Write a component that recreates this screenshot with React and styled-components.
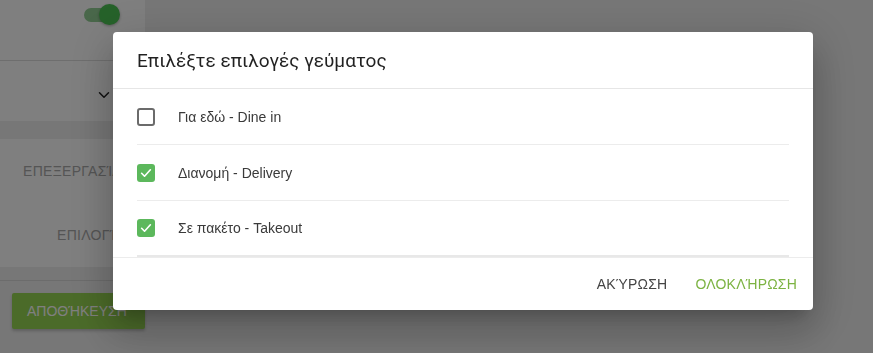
import React, { useState } from 'react';
import styled, { createGlobalStyle } from 'styled-components';
import { ChevronDown } from 'lucide-react';

const GlobalStyle = createGlobalStyle`
  html, body {
    margin: 0;
    padding: 0;
    background: #eeeeee;
    font-family: "Liberation Sans", Arial, sans-serif;
  }
`;

const Page = styled.div`
  width: 873px;
  height: 353px;
  overflow: hidden;
`;

const Sidebar = styled.div`
  width: 145px;
  display: flex;
  flex-direction: column;
`;

const Card = styled.div`
  background: #ffffff;
  margin-bottom: ${p => p.$gap || 0}px;
  overflow: hidden;
`;

const ToggleRow = styled.div`
  height: 61px;
  border-bottom: 1px solid #dddddd;
  display: flex;
  justify-content: flex-end;
  padding: 2px 35px 0 0;
  box-sizing: border-box;
`;

const Track = styled.div`
  position: relative;
  width: 26px;
  height: 14px;
  margin-top: 6px;
  border-radius: 7px;
  background: #93cf95;
`;

const Thumb = styled.div`
  position: absolute;
  right: -10px;
  top: -4px;
  width: 21px;
  height: 21px;
  border-radius: 50%;
  background: #4cc554;
  box-shadow: 0 1px 3px rgba(0, 0, 0, 0.3);
`;

const SelectRow = styled.div`
  height: 60px;
  display: flex;
  justify-content: flex-end;
  align-items: center;
  padding: 8px 32px 0 0;
  box-sizing: border-box;
  color: #222;
`;

const TabItem = styled.div`
  height: 64px;
  display: flex;
  align-items: center;
  padding-left: ${p => p.$indent}px;
  white-space: nowrap;
  font-size: 14px;
  color: #aaaaaa;
  letter-spacing: 0.3px;
`;

const Divider = styled.div`
  height: 1px;
  background: #d8d8d8;
  margin: 13px 0 12px;
`;

const SaveButton = styled.button`
  margin-left: 12px;
  width: 133px;
  height: 36px;
  border: none;
  border-radius: 2px;
  background: #97d653;
  color: #ffffff;
  font-family: inherit;
  font-size: 14px;
  text-align: left;
  padding-left: 15px;
  white-space: nowrap;
  box-shadow: 0 2px 3px rgba(0, 0, 0, 0.2);
`;

const Overlay = styled.div`
  position: fixed;
  inset: 0;
  background: rgba(0, 0, 0, 0.5);
  padding: 32px 0 0 113px;
`;

const Dialog = styled.div`
  width: 700px;
  height: 278px;
  background: #ffffff;
  border-radius: 4px;
  display: flex;
  flex-direction: column;
  box-shadow: 0 11px 15px -7px rgba(0, 0, 0, 0.2), 0 24px 38px 3px rgba(0, 0, 0, 0.14), 0 9px 46px 8px rgba(0, 0, 0, 0.12);
`;

const Title = styled.h2`
  margin: 0;
  height: 57px;
  box-sizing: border-box;
  padding: 17px 24px 0;
  font-family: Roboto, "Noto Sans", sans-serif;
  font-size: 19px;
  font-weight: 400;
  color: rgba(0, 0, 0, 0.87);
  border-bottom: 1px solid #e6e6e6;
`;

const Content = styled.div`
  padding: 0 24px;
`;

const OptionRow = styled.label`
  height: 56px;
  display: flex;
  align-items: center;
  gap: 23px;
  border-bottom: 1px solid #ececec;
  box-sizing: border-box;
  font-size: 14px;
  color: #3a3a3a;
  cursor: pointer;
  &:last-child {
    border-bottom: 2px solid #e8e8e8;
  }
`;

const Box = styled.span`
  width: 18px;
  height: 18px;
  box-sizing: border-box;
  border-radius: 3px;
  border: ${p => (p.$checked ? 'none' : '2px solid #6b6b6b')};
  background: ${p => (p.$checked ? '#5cb85c' : '#ffffff')};
  display: flex;
  align-items: center;
  justify-content: center;
`;

const Actions = styled.div`
  flex: 1;
  display: flex;
  justify-content: flex-end;
  align-items: center;
  gap: 12px;
  padding: 0 8px 0 0;
  border-top: 1px solid #ececec;
`;

const ActionButton = styled.button`
  border: none;
  background: none;
  padding: 6px 8px;
  font-family: inherit;
  font-size: 14px;
  letter-spacing: 0.2px;
  color: ${p => (p.$primary ? '#7cb342' : '#444444')};
  cursor: pointer;
`;

const options = [
  { id: 'dine', label: 'Για εδώ - Dine in', checked: false },
  { id: 'delivery', label: 'Διανομή - Delivery', checked: true },
  { id: 'takeout', label: 'Σε πακέτο - Takeout', checked: true },
];

const Check = () => (
  <svg width="14" height="14" viewBox="0 0 24 24" fill="none" stroke="#fff" strokeWidth="2.8" strokeLinecap="round" strokeLinejoin="round">
    <path d="M4.5 12.5l5 5L19.5 6.5" />
  </svg>
);

const App = () => {
  const [selected, setSelected] = useState(
    options.reduce((acc, o) => ({ ...acc, [o.id]: o.checked }), {})
  );

  const toggle = (id) => setSelected({ ...selected, [id]: !selected[id] });

  return (
    <Page>
      <GlobalStyle />
      <Sidebar>
        <Card $gap={18}>
          <ToggleRow>
            <Track>
              <Thumb />
            </Track>
          </ToggleRow>
          <SelectRow>
            <ChevronDown size={18} strokeWidth={2} />
          </SelectRow>
        </Card>
        <Card>
          <TabItem $indent={23}>ΕΠΕΞΕΡΓΑΣΊΑ</TabItem>
          <TabItem $indent={57}>ΕΠΙΛΟΓΉ</TabItem>
        </Card>
        <Divider />
        <SaveButton>ΑΠΟΘΉΚΕΥΣΗ</SaveButton>
      </Sidebar>

      <Overlay>
        <Dialog>
          <Title>Επιλέξτε επιλογές γεύματος</Title>
          <Content>
            {options.map((o) => (
              <OptionRow key={o.id} onClick={() => toggle(o.id)}>
                <Box $checked={selected[o.id]}>{selected[o.id] && <Check />}</Box>
                {o.label}
              </OptionRow>
            ))}
          </Content>
          <Actions>
            <ActionButton>ΑΚΎΡΩΣΗ</ActionButton>
            <ActionButton $primary>ΟΛΟΚΛΉΡΩΣΗ</ActionButton>
          </Actions>
        </Dialog>
      </Overlay>
    </Page>
  );
};

export default App;
